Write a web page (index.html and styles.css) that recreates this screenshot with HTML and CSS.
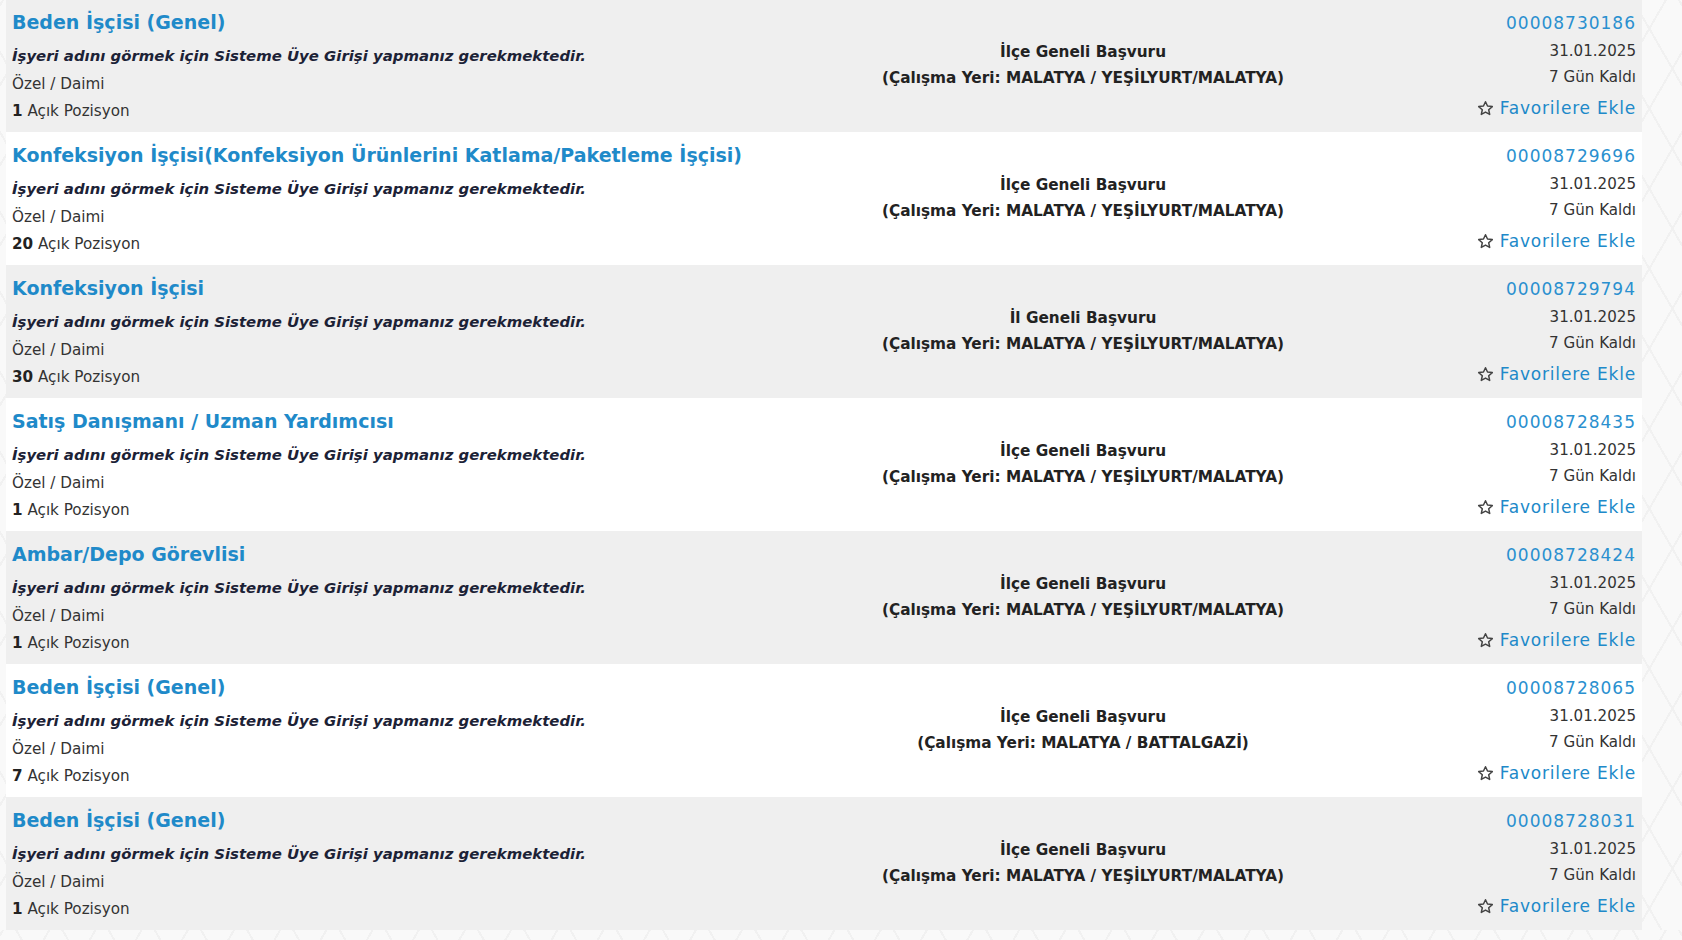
FILE: index.html
```html
<!DOCTYPE html>
<html lang="tr">
<head>
    <meta charset="utf-8">
    <title>İş İlanları</title>
    <link rel="stylesheet" href="styles.css">
</head>
<body>
    <div id="ilanListesi">

        <div class="ilan">
            <div class="ilanSol">
                <a href="#" class="baslik">Beden İşçisi (Genel)</a>
                <div class="isyeri">İşyeri adını görmek için Sisteme Üye Girişi yapmanız gerekmektedir.</div>
                <div class="satir tur">Özel / Daimi</div>
                <div class="satir pozisyon"><b>1</b> Açık Pozisyon</div>
            </div>
            <div class="ilanOrta">
                <div>İlçe Geneli Başvuru</div>
                <div>(Çalışma Yeri: MALATYA / YEŞİLYURT/MALATYA)</div>
            </div>
            <div class="ilanSag">
                <a href="#" class="ilanNo">00008730186</a>
                <div class="tarih">31.01.2025</div>
                <div class="kalan">7 Gün Kaldı</div>
                <a href="#" class="favori"><svg viewBox="0 0 16 16"><path d="M8 1.6l1.9 4.1 4.5.5-3.4 3 .95 4.4L8 11.4l-3.95 2.2.95-4.4-3.4-3 4.5-.5z"/></svg>Favorilere Ekle</a>
            </div>
        </div>

        <div class="ilan">
            <div class="ilanSol">
                <a href="#" class="baslik">Konfeksiyon İşçisi(Konfeksiyon Ürünlerini Katlama/Paketleme İşçisi)</a>
                <div class="isyeri">İşyeri adını görmek için Sisteme Üye Girişi yapmanız gerekmektedir.</div>
                <div class="satir tur">Özel / Daimi</div>
                <div class="satir pozisyon"><b>20</b> Açık Pozisyon</div>
            </div>
            <div class="ilanOrta">
                <div>İlçe Geneli Başvuru</div>
                <div>(Çalışma Yeri: MALATYA / YEŞİLYURT/MALATYA)</div>
            </div>
            <div class="ilanSag">
                <a href="#" class="ilanNo">00008729696</a>
                <div class="tarih">31.01.2025</div>
                <div class="kalan">7 Gün Kaldı</div>
                <a href="#" class="favori"><svg viewBox="0 0 16 16"><path d="M8 1.6l1.9 4.1 4.5.5-3.4 3 .95 4.4L8 11.4l-3.95 2.2.95-4.4-3.4-3 4.5-.5z"/></svg>Favorilere Ekle</a>
            </div>
        </div>

        <div class="ilan">
            <div class="ilanSol">
                <a href="#" class="baslik">Konfeksiyon İşçisi</a>
                <div class="isyeri">İşyeri adını görmek için Sisteme Üye Girişi yapmanız gerekmektedir.</div>
                <div class="satir tur">Özel / Daimi</div>
                <div class="satir pozisyon"><b>30</b> Açık Pozisyon</div>
            </div>
            <div class="ilanOrta">
                <div>İl Geneli Başvuru</div>
                <div>(Çalışma Yeri: MALATYA / YEŞİLYURT/MALATYA)</div>
            </div>
            <div class="ilanSag">
                <a href="#" class="ilanNo">00008729794</a>
                <div class="tarih">31.01.2025</div>
                <div class="kalan">7 Gün Kaldı</div>
                <a href="#" class="favori"><svg viewBox="0 0 16 16"><path d="M8 1.6l1.9 4.1 4.5.5-3.4 3 .95 4.4L8 11.4l-3.95 2.2.95-4.4-3.4-3 4.5-.5z"/></svg>Favorilere Ekle</a>
            </div>
        </div>

        <div class="ilan">
            <div class="ilanSol">
                <a href="#" class="baslik">Satış Danışmanı / Uzman Yardımcısı</a>
                <div class="isyeri">İşyeri adını görmek için Sisteme Üye Girişi yapmanız gerekmektedir.</div>
                <div class="satir tur">Özel / Daimi</div>
                <div class="satir pozisyon"><b>1</b> Açık Pozisyon</div>
            </div>
            <div class="ilanOrta">
                <div>İlçe Geneli Başvuru</div>
                <div>(Çalışma Yeri: MALATYA / YEŞİLYURT/MALATYA)</div>
            </div>
            <div class="ilanSag">
                <a href="#" class="ilanNo">00008728435</a>
                <div class="tarih">31.01.2025</div>
                <div class="kalan">7 Gün Kaldı</div>
                <a href="#" class="favori"><svg viewBox="0 0 16 16"><path d="M8 1.6l1.9 4.1 4.5.5-3.4 3 .95 4.4L8 11.4l-3.95 2.2.95-4.4-3.4-3 4.5-.5z"/></svg>Favorilere Ekle</a>
            </div>
        </div>

        <div class="ilan">
            <div class="ilanSol">
                <a href="#" class="baslik">Ambar/Depo Görevlisi</a>
                <div class="isyeri">İşyeri adını görmek için Sisteme Üye Girişi yapmanız gerekmektedir.</div>
                <div class="satir tur">Özel / Daimi</div>
                <div class="satir pozisyon"><b>1</b> Açık Pozisyon</div>
            </div>
            <div class="ilanOrta">
                <div>İlçe Geneli Başvuru</div>
                <div>(Çalışma Yeri: MALATYA / YEŞİLYURT/MALATYA)</div>
            </div>
            <div class="ilanSag">
                <a href="#" class="ilanNo">00008728424</a>
                <div class="tarih">31.01.2025</div>
                <div class="kalan">7 Gün Kaldı</div>
                <a href="#" class="favori"><svg viewBox="0 0 16 16"><path d="M8 1.6l1.9 4.1 4.5.5-3.4 3 .95 4.4L8 11.4l-3.95 2.2.95-4.4-3.4-3 4.5-.5z"/></svg>Favorilere Ekle</a>
            </div>
        </div>

        <div class="ilan">
            <div class="ilanSol">
                <a href="#" class="baslik">Beden İşçisi (Genel)</a>
                <div class="isyeri">İşyeri adını görmek için Sisteme Üye Girişi yapmanız gerekmektedir.</div>
                <div class="satir tur">Özel / Daimi</div>
                <div class="satir pozisyon"><b>7</b> Açık Pozisyon</div>
            </div>
            <div class="ilanOrta">
                <div>İlçe Geneli Başvuru</div>
                <div>(Çalışma Yeri: MALATYA / BATTALGAZİ)</div>
            </div>
            <div class="ilanSag">
                <a href="#" class="ilanNo">00008728065</a>
                <div class="tarih">31.01.2025</div>
                <div class="kalan">7 Gün Kaldı</div>
                <a href="#" class="favori"><svg viewBox="0 0 16 16"><path d="M8 1.6l1.9 4.1 4.5.5-3.4 3 .95 4.4L8 11.4l-3.95 2.2.95-4.4-3.4-3 4.5-.5z"/></svg>Favorilere Ekle</a>
            </div>
        </div>

        <div class="ilan">
            <div class="ilanSol">
                <a href="#" class="baslik">Beden İşçisi (Genel)</a>
                <div class="isyeri">İşyeri adını görmek için Sisteme Üye Girişi yapmanız gerekmektedir.</div>
                <div class="satir tur">Özel / Daimi</div>
                <div class="satir pozisyon"><b>1</b> Açık Pozisyon</div>
            </div>
            <div class="ilanOrta">
                <div>İlçe Geneli Başvuru</div>
                <div>(Çalışma Yeri: MALATYA / YEŞİLYURT/MALATYA)</div>
            </div>
            <div class="ilanSag">
                <a href="#" class="ilanNo">00008728031</a>
                <div class="tarih">31.01.2025</div>
                <div class="kalan">7 Gün Kaldı</div>
                <a href="#" class="favori"><svg viewBox="0 0 16 16"><path d="M8 1.6l1.9 4.1 4.5.5-3.4 3 .95 4.4L8 11.4l-3.95 2.2.95-4.4-3.4-3 4.5-.5z"/></svg>Favorilere Ekle</a>
            </div>
        </div>

    </div>
</body>
</html>
```

FILE: styles.css
```css
body {
    margin: 0;
    font-family: "DejaVu Sans", Verdana, sans-serif;
    color: #333;
    background-color: #f9f9f9;
    background-image:
        repeating-linear-gradient(60deg, transparent 0 38px, #f1f1f1 38px 40px),
        repeating-linear-gradient(-60deg, transparent 0 38px, #f1f1f1 38px 40px);
}

a {
    text-decoration: none;
}

#ilanListesi {
    width: 1636px;
    margin: -1px 0 0 6px;
}

.ilan {
    display: grid;
    grid-template-columns: 798px 546px 1fr;
    height: 133px;
    box-sizing: border-box;
    padding: 7px 6px 0 6px;
    background-color: #ffffff;
}

.ilan:nth-child(odd) {
    background-color: #efefef;
}

.ilanSol .baslik {
    display: block;
    font-size: 19px;
    font-weight: bold;
    line-height: 33px;
    color: #1f8ac9;
    white-space: nowrap;
}

.isyeri {
    font-size: 14.9px;
    font-weight: bold;
    font-style: italic;
    line-height: 34px;
    color: #1c2236;
}

.satir {
    font-size: 15.2px;
}

.tur {
    line-height: 23px;
}

.pozisyon {
    line-height: 31px;
}

.satir b {
    color: #222;
}

.ilanOrta {
    align-self: center;
    margin-top: -8px;
    text-align: center;
    font-size: 15.3px;
    font-weight: bold;
    line-height: 26px;
    color: #222;
}

.ilanSag {
    text-align: right;
    font-size: 15.1px;
}

.ilanNo {
    display: block;
    font-size: 17px;
    line-height: 34px;
    letter-spacing: 1px;
    color: #2a90cf;
}

.tarih {
    line-height: 22px;
}

.kalan {
    line-height: 31px;
}

.favori {
    display: inline-flex;
    align-items: center;
    gap: 6px;
    font-size: 17px;
    line-height: 30px;
    letter-spacing: 0.8px;
    color: #2089c9;
}

.favori svg {
    width: 17px;
    height: 17px;
    fill: none;
    stroke: #444;
    stroke-width: 1.4;
    stroke-linejoin: round;
}
```
